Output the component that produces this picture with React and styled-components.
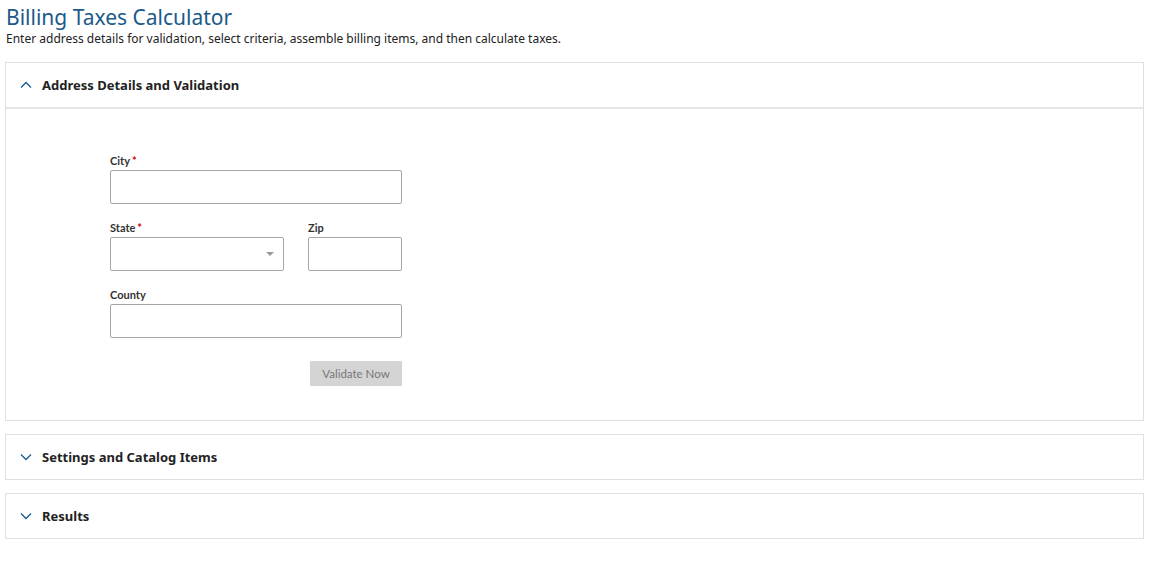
import React from 'react';
import styled, { createGlobalStyle } from 'styled-components';

const Global = createGlobalStyle`
  body {
    margin: 0;
    background: #fff;
    font-family: "Noto Sans", "Open Sans", sans-serif;
    color: #222;
  }
`;

const Page = styled.div`
  padding: 4px 14px 0 5px;
`;

const Title = styled.h1`
  margin: 0 0 0 1px;
  font-size: 21px;
  font-weight: 400;
  line-height: 26px;
  color: #1b5a8a;
`;

const Subtitle = styled.p`
  margin: 0 0 15px 1px;
  font-size: 12px;
  line-height: 17px;
  color: #222;
`;

const Panel = styled.section`
  border: 1px solid #e0e0e0;
  margin-bottom: 13px;
`;

const PanelHeader = styled.div`
  height: 44px;
  display: flex;
  align-items: center;
  gap: 10px;
  padding-left: 14px;
  font-size: 13px;
  font-weight: 700;
  color: #222;
  border-bottom: ${p => (p.open ? '2px solid #e6e6e6' : 'none')};
`;

const PanelBody = styled.div`
  padding: 45px 0 34px 104px;
`;

const Form = styled.div`
  width: 292px;
  display: flex;
  flex-direction: column;
  gap: 17px;
`;

const Row = styled.div`
  display: flex;
  gap: 24px;
`;

const Field = styled.div`
  display: flex;
  flex-direction: column;
  width: ${p => p.w || '100%'};
`;

const Label = styled.label`
  font-family: Lato, sans-serif;
  font-size: 11px;
  font-weight: 700;
  color: #333;
  line-height: 14px;
  margin-bottom: 2px;
  span { color: #c00; margin-left: 2px; }
`;

const Input = styled.div`
  position: relative;
  height: 32px;
  border: 1px solid #a6a6a6;
  border-radius: 2px;
  background: #fff;
`;

const Caret = styled.div`
  position: absolute;
  right: 9px;
  top: 14px;
  border-left: 4px solid transparent;
  border-right: 4px solid transparent;
  border-top: 4px solid #999;
`;

const Actions = styled.div`
  display: flex;
  justify-content: flex-end;
  margin-top: 6px;
`;

const Button = styled.button`
  width: 92px;
  height: 25px;
  border: none;
  border-radius: 1px;
  background: #d4d4d4;
  color: #777;
  font-family: Lato, sans-serif;
  font-size: 11.5px;
`;

const Chevron = ({ up }) => (
  <svg width="12" height="8" viewBox="0 0 12 8" fill="none" stroke="#1b5a8a" strokeWidth="1.3">
    <path d={up ? 'M1 6.5 L6 1.5 L11 6.5' : 'M1 1.5 L6 6.5 L11 1.5'} />
  </svg>
);

export default function App() {
  return (
    <Page>
      <Global />
      <Title>Billing Taxes Calculator</Title>
      <Subtitle>Enter address details for validation, select criteria, assemble billing items, and then calculate taxes.</Subtitle>
      <Panel>
        <PanelHeader open>
          <Chevron up />
          Address Details and Validation
        </PanelHeader>
        <PanelBody>
          <Form>
            <Field>
              <Label>City<span>*</span></Label>
              <Input />
            </Field>
            <Row>
              <Field w="174px">
                <Label>State<span>*</span></Label>
                <Input><Caret /></Input>
              </Field>
              <Field w="94px">
                <Label>Zip</Label>
                <Input />
              </Field>
            </Row>
            <Field>
              <Label>County</Label>
              <Input />
            </Field>
            <Actions>
              <Button>Validate Now</Button>
            </Actions>
          </Form>
        </PanelBody>
      </Panel>
      <Panel>
        <PanelHeader>
          <Chevron />
          Settings and Catalog Items
        </PanelHeader>
      </Panel>
      <Panel>
        <PanelHeader>
          <Chevron />
          Results
        </PanelHeader>
      </Panel>
    </Page>
  );
}
